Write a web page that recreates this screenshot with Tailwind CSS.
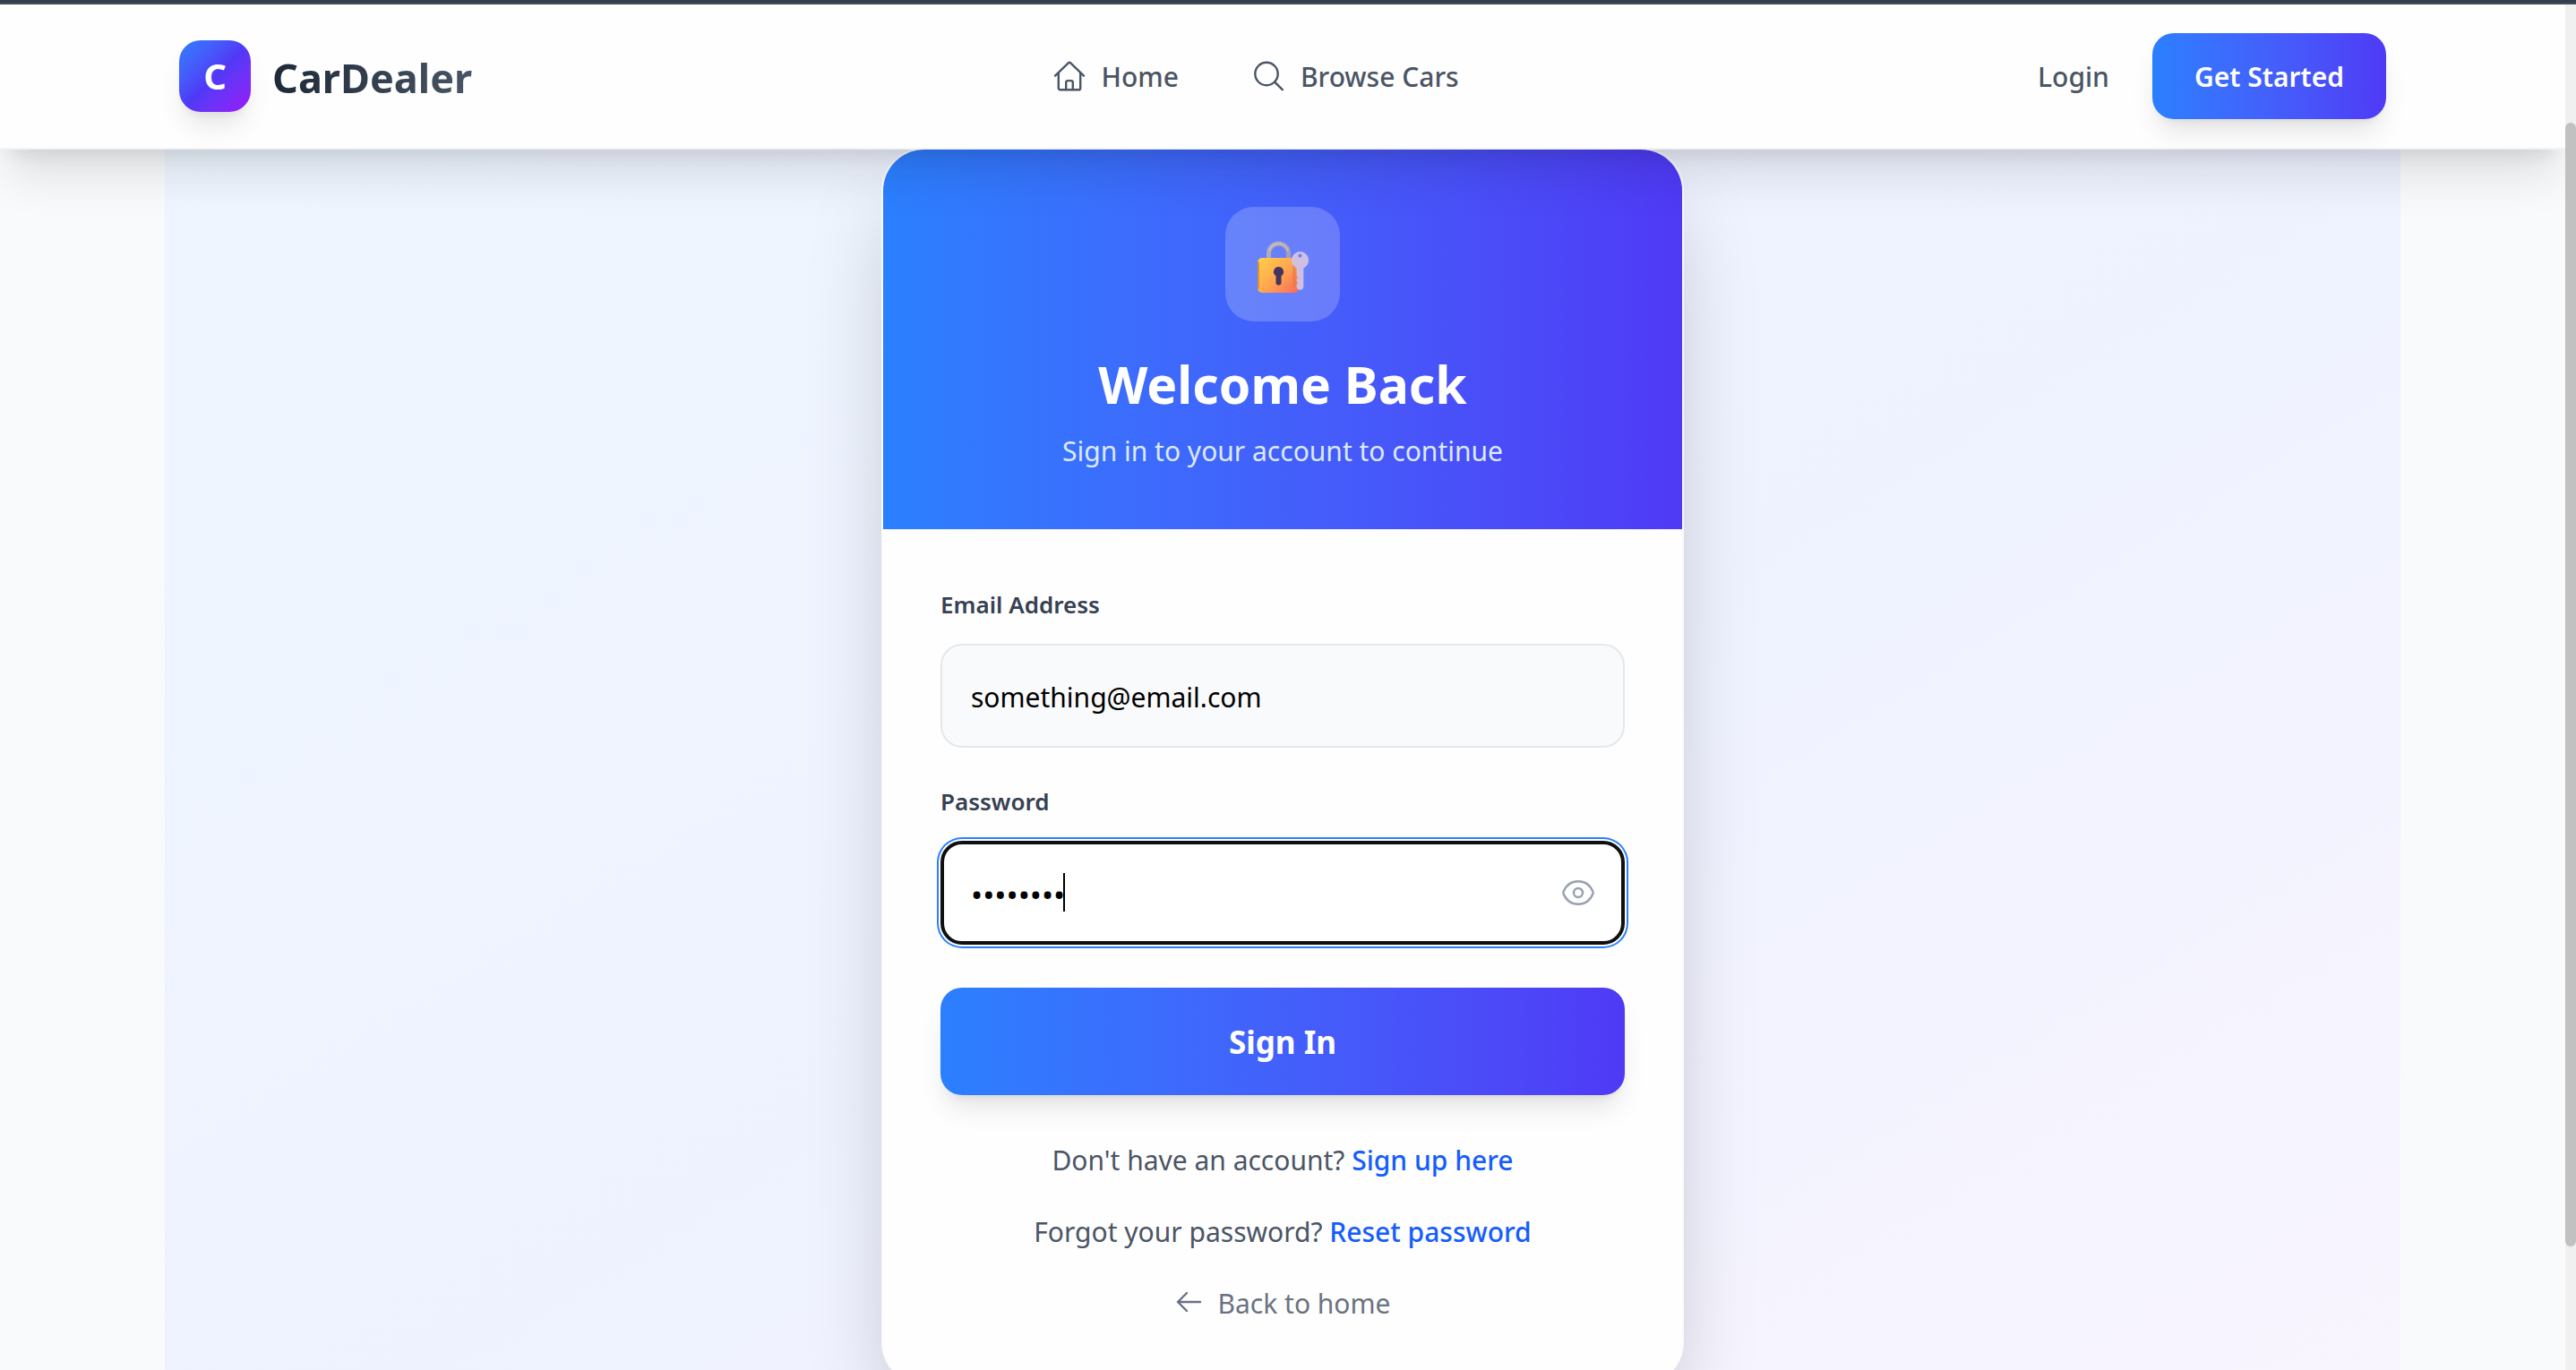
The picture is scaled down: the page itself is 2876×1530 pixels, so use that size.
<!DOCTYPE html>
<html lang="en">
<head>
  <meta charset="UTF-8">
  <meta name="viewport" content="width=device-width, initial-scale=1.0">
  <title>CarDealer - Sign In</title>
  <script src="https://cdn.jsdelivr.net/npm/@tailwindcss/browser@4"></script>
</head>
<body class="flex h-screen flex-col overflow-hidden bg-[#f8fafc] font-['Noto_Sans',sans-serif] text-[30px] leading-[50px]">
  <div class="h-[5px] shrink-0 border-b-2 border-[#464b52] bg-[#323d4f]"></div>

  <div class="flex min-h-0 flex-1">
    <div class="flex min-w-0 flex-1 flex-col overflow-hidden">
      <!-- Site header -->
      <header class="relative z-10 shrink-0 border-b-2 border-gray-100 bg-[#fefefe] shadow-[0_40px_50px_-10px_rgba(0,0,0,0.1),0_16px_20px_-12px_rgba(0,0,0,0.1)]">
        <div class="mx-auto flex h-40 max-w-[2560px] items-center justify-between px-12">
          <a href="#" class="flex items-center gap-6">
            <span class="flex size-20 items-center justify-center rounded-3xl bg-linear-to-br from-[#2b7fff] via-[#4f39f6] to-[#9810fa] text-[40px] font-bold text-white shadow-[0_20px_30px_-6px_rgba(0,0,0,0.1),0_8px_12px_-8px_rgba(0,0,0,0.1)]">C</span>
            <span class="bg-linear-to-r from-gray-800 to-gray-600 bg-clip-text pt-1 text-[45px] leading-[64px] font-bold text-transparent">CarDealer</span>
          </a>

          <nav class="flex items-center gap-20 font-medium text-gray-600">
            <a href="#" class="flex items-center gap-4">
              <svg class="size-10" viewBox="0 0 40 40" fill="none" stroke="currentColor" stroke-width="2.4" stroke-linecap="round" stroke-linejoin="round" aria-hidden="true">
                <path d="M4 19.6 19 5.2a1.5 1.5 0 0 1 2 0L36 19.6"/>
                <path d="M7.8 16.6v16.8a1.9 1.9 0 0 0 1.9 1.9h20.6a1.9 1.9 0 0 0 1.9-1.9V16.6"/>
                <path d="M16.2 35v-8a1.9 1.9 0 0 1 1.9-1.9h3.8a1.9 1.9 0 0 1 1.9 1.9v8"/>
              </svg>
              <span class="pt-0.5">Home</span>
            </a>
            <a href="#" class="flex items-center gap-4">
              <svg class="size-10" viewBox="0 0 40 40" fill="none" stroke="currentColor" stroke-width="2.4" stroke-linecap="round" aria-hidden="true">
                <circle cx="18" cy="17.5" r="12.7"/>
                <path d="m27.2 26.6 8.6 8.6"/>
              </svg>
              <span class="pt-0.5">Browse Cars</span>
            </a>
          </nav>

          <div class="flex items-center gap-12">
            <a href="#" class="pt-0.5 font-medium text-gray-600">Login</a>
            <a href="#" class="flex h-24 items-center rounded-3xl bg-linear-to-r from-[#2b7fff] to-[#4f39f6] px-[47px] pt-0.5 font-semibold text-white shadow-[0_20px_30px_-6px_rgba(0,0,0,0.1),0_8px_12px_-8px_rgba(0,0,0,0.1)]">Get Started</a>
          </div>
        </div>
      </header>

      <!-- Sign-in section -->
      <main class="mx-auto -mt-0.5 w-full max-w-[2496px] bg-linear-to-br from-blue-50 via-indigo-50 to-purple-50 pb-40">
        <section class="mx-auto max-w-4xl overflow-hidden rounded-[48px] border-2 border-[#fafbfc] bg-[#fefefe] shadow-[0_50px_100px_-24px_rgba(0,0,0,0.25)]">
          <div class="bg-linear-to-r from-[#2b7fff] to-[#4f39f6] px-16 pt-16 pb-[62px] text-center">
            <div class="mx-auto mb-8 flex size-32 items-center justify-center rounded-4xl bg-white/20">
              <svg class="size-16" viewBox="0 0 64 64" fill="none" aria-hidden="true">
                <defs>
                  <linearGradient id="lock-body" x1="8" y1="26" x2="44" y2="64" gradientUnits="userSpaceOnUse">
                    <stop stop-color="#ffcb4a"/><stop offset=".5" stop-color="#ffa84e"/><stop offset="1" stop-color="#f9725a"/>
                  </linearGradient>
                  <linearGradient id="lock-shackle" x1="14" y1="8" x2="40" y2="26" gradientUnits="userSpaceOnUse">
                    <stop stop-color="#b5b0c0"/><stop offset="1" stop-color="#a59db8"/>
                  </linearGradient>
                </defs>
                <path d="M16.500 28v-8a11 11 0 0 1 22 0v8" stroke="url(#lock-shackle)" stroke-width="5"/>
                <path d="M17 17a11 11 0 0 1 21 0" stroke="#c9c3b8" stroke-width="1.500"/>
                <rect x="4" y="25" width="46" height="39" rx="5" fill="url(#lock-body)"/>
                <path d="M5 30v29" stroke="#d99230" stroke-width="2" stroke-linecap="round"/>
                <path d="M27.500 35a5.600 5.600 0 0 1 3 10.300v7.200a3 3 0 0 1-6 0v-7.200a5.600 5.600 0 0 1 3-10.300z" fill="#44355f"/>
                <path d="M45 30v26" stroke="#e0763c" stroke-width="3" stroke-opacity=".55" stroke-linecap="round"/>
                <path fill-rule="evenodd" d="M51.500 18a9.600 9.600 0 0 1 3.800 18.400V57a3.800 3.800 0 0 1-7.600 0v-2.500l1.500-1.500-1.500-1.800v-2.400l1.500-1.800-1.500-2V36.400A9.600 9.600 0 0 1 51.500 18zm-2 4.500a2 2 0 1 0 4 0a2 2 0 1 0-4 0z" fill="#cfc0e2"/>
              </svg>
            </div>
            <h1 class="mb-3 text-[57px] leading-[76px] font-bold text-white">Welcome Back</h1>
            <p class="text-blue-100">Sign in to your account to continue</p>
          </div>

          <div class="p-16">
            <form>
              <label for="email" class="mb-6 block text-[26px] leading-10 font-semibold text-gray-700">Email Address</label>
              <input id="email" type="email" value="something@email.com" class="mb-10 block h-[116px] w-full rounded-3xl border-2 border-gray-200 bg-gray-50 px-8 pt-0.5 text-black">

              <label for="password" class="mb-6 block text-[26px] leading-10 font-semibold text-gray-700">Password</label>
              <div class="relative mb-12">
                <input id="password" type="password" value="password" class="block h-[116px] w-full rounded-3xl border-4 border-[#101010] bg-white pt-0.5 pr-24 pl-[30px] text-[35px] text-black ring-2 ring-[#2b7fff] ring-offset-2 ring-offset-white outline-none">
                <span class="absolute top-9 left-[137px] h-[43px] w-0.5 bg-black" aria-hidden="true"></span>
                <button type="button" aria-label="Show password" class="absolute top-[38px] right-8 text-[#99a1af]">
                  <svg class="size-10" viewBox="0 0 40 40" fill="none" stroke="currentColor" stroke-width="2.4" aria-hidden="true">
                    <path d="M3.600 21.200a3 3 0 0 1 0-2.400C6.600 11.600 12.700 7.300 20 7.300s13.400 4.300 16.400 11.500a3 3 0 0 1 0 2.400C33.400 28.400 27.300 32.700 20 32.700S6.600 28.400 3.600 21.200z"/>
                    <circle cx="20" cy="20" r="5"/>
                  </svg>
                </button>
              </div>

              <button type="submit" class="block h-[120px] w-full rounded-3xl bg-linear-to-r from-[#2b7fff] to-[#4f39f6] pt-0.5 text-[35px] font-bold text-white shadow-[0_20px_30px_-6px_rgba(0,0,0,0.1),0_8px_12px_-8px_rgba(0,0,0,0.1)]">Sign In</button>
            </form>

            <div class="mt-12 flex flex-col items-center gap-[30px] text-gray-600">
              <p>Don't have an account? <a href="#" class="font-medium text-blue-600">Sign up here</a></p>
              <p>Forgot your password? <a href="#" class="font-medium text-blue-600">Reset password</a></p>
              <a href="#" class="flex items-center gap-4 text-gray-500">
                <svg class="size-8" viewBox="0 0 32 32" fill="none" stroke="currentColor" stroke-width="2.4" stroke-linecap="round" stroke-linejoin="round" aria-hidden="true">
                  <path d="M13 4 3 14l10 10M3 14h25"/>
                </svg>
                Back to home
              </a>
            </div>
          </div>
        </section>
      </main>
    </div>

    <!-- Scroll track -->
    <div class="w-3 shrink-0 bg-[#f0f0f0] pt-[132px]" aria-hidden="true">
      <div class="h-[1255px] rounded-full bg-[#c1c1c1]"></div>
    </div>
  </div>
</body>
</html>
